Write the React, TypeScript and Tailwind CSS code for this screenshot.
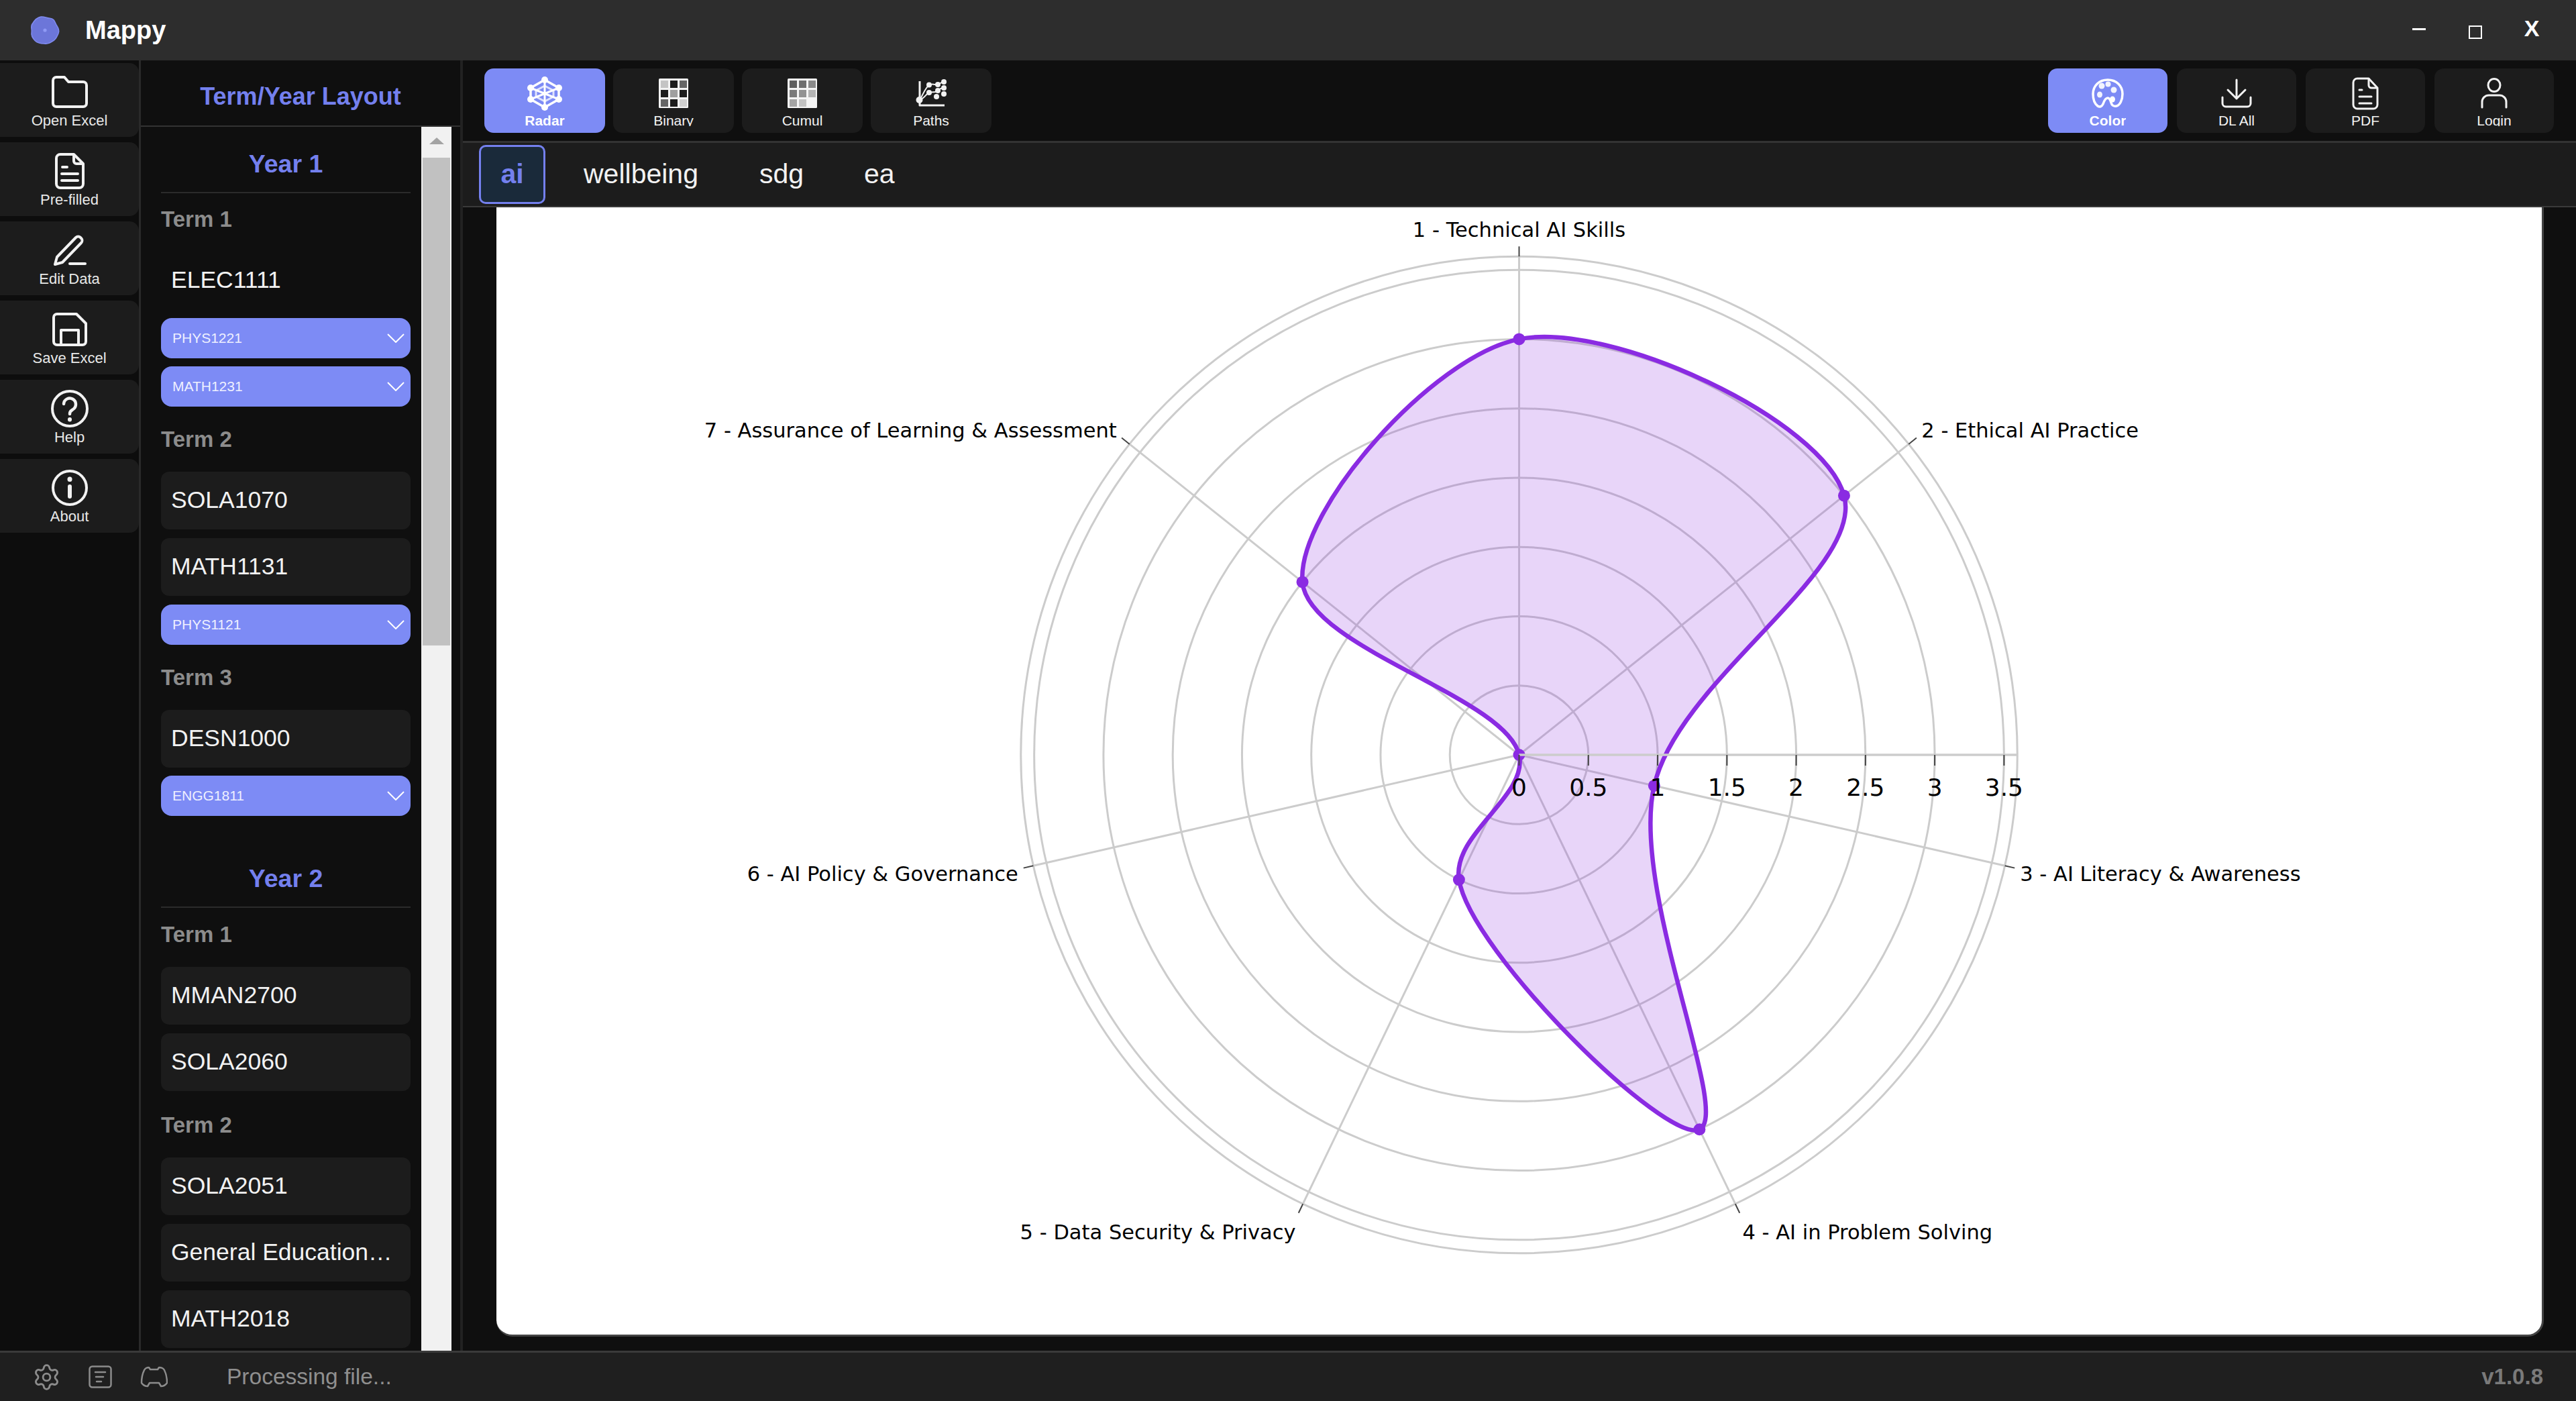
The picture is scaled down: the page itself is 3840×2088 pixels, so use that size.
import React from "react";
import { Settings } from "lucide-react";

const CX = 1525;
const CY = 816;
const UNIT = 206.6;
const OUTER = 743;
const values = [3, 3, 1, 3, 1, 0, 2];
const ang = (i: number) => (i * 2 * Math.PI) / 7;
const polar = (r: number, i: number): [number, number] => [CX + r * Math.sin(ang(i)), CY - r * Math.cos(ang(i))];
const pts = values.map((v, i) => polar(v * UNIT, i));

function controls(p0: number[], p1: number[], p2: number[]) {
  const d1x = p0[0] - p1[0], d1y = p0[1] - p1[1], d2x = p2[0] - p1[0], d2y = p2[1] - p1[1];
  const d1a = Math.pow(d1x * d1x + d1y * d1y, 0.25), d2a = Math.pow(d2x * d2x + d2y * d2y, 0.25);
  const nx = d2a * d2a * d1x - d1a * d1a * d2x, ny = d2a * d2a * d1y - d1a * d1a * d2y;
  const a = 3 * d2a * (d1a + d2a), b = 3 * d1a * (d1a + d2a);
  return [
    [p1[0] + (a ? nx / a : 0), p1[1] + (a ? ny / a : 0)],
    [p1[0] - (b ? nx / b : 0), p1[1] - (b ? ny / b : 0)],
  ];
}
const n = pts.length;
const cps = pts.map((p, i) => controls(pts[(i + n - 1) % n], p, pts[(i + 1) % n]));
let curve = `M${pts[0][0]} ${pts[0][1]}`;
for (let i = 0; i < n; i++) {
  const j = (i + 1) % n;
  curve += `C${cps[i][1][0]} ${cps[i][1][1]} ${cps[j][0][0]} ${cps[j][0][1]} ${pts[j][0]} ${pts[j][1]}`;
}
curve += "Z";

const labels: { t: string; x: number; y: number; a: "start" | "middle" | "end" }[] = [
  { t: "1 - Technical AI Skills", x: 1525, y: 44, a: "middle" },
  { t: "2 - Ethical AI Practice", x: 2125, y: 343, a: "start" },
  { t: "3 - AI Literacy & Awareness", x: 2272, y: 1004, a: "start" },
  { t: "4 - AI in Problem Solving", x: 1858, y: 1538, a: "start" },
  { t: "5 - Data Security & Privacy", x: 1192, y: 1538, a: "end" },
  { t: "6 - AI Policy & Governance", x: 778, y: 1004, a: "end" },
  { t: "7 - Assurance of Learning & Assessment", x: 925, y: 343, a: "end" },
];
const radial = ["0", "0.5", "1", "1.5", "2", "2.5", "3", "3.5"];

function Radar() {
  return (
    <svg width="100%" height="100%" viewBox="0 0 3050 1680" className="block">
      {[0.5, 1, 1.5, 2, 2.5, 3, 3.5].map((v) => (
        <circle key={v} cx={CX} cy={CY} r={v * UNIT} fill="none" stroke="#cccccc" strokeWidth="3" />
      ))}
      <circle cx={CX} cy={CY} r={OUTER} fill="none" stroke="#cccccc" strokeWidth="3" />
      {values.map((_, i) => {
        const e = polar(OUTER, i);
        return <line key={i} x1={CX} y1={CY} x2={e[0]} y2={e[1]} stroke="#cccccc" strokeWidth="3" />;
      })}
      <path d={curve} fill="#8a2be2" fillOpacity="0.2" stroke="none" />
      <path d={curve} fill="none" stroke="#8a2be2" strokeWidth="6.5" />
      {pts.map((p, i) => (
        <circle key={i} cx={p[0]} cy={p[1]} r="9" fill="#8a2be2" />
      ))}
      <line x1={CX} y1={CY} x2={CX + OUTER} y2={CY} stroke="#cccccc" strokeWidth="3.5" />
      {radial.map((t, i) => (
        <g key={t}>
          <line x1={CX + i * 0.5 * UNIT} y1={CY} x2={CX + i * 0.5 * UNIT} y2={CY + 16} stroke="#444444" strokeWidth="2" />
          <text x={CX + i * 0.5 * UNIT} y={CY + 61} textAnchor="middle" fontSize="36" fill="#000" fontFamily="'DejaVu Sans', sans-serif">
            {t}
          </text>
        </g>
      ))}
      {values.map((_, i) => {
        const a = polar(OUTER, i), b = polar(OUTER + 15, i);
        return <line key={i} x1={a[0]} y1={a[1]} x2={b[0]} y2={b[1]} stroke="#444444" strokeWidth="2" />;
      })}
      {labels.map((l) => (
        <text key={l.t} x={l.x} y={l.y} textAnchor={l.a} fontSize="30.5" fill="#000" fontFamily="'DejaVu Sans', sans-serif">
          {l.t}
        </text>
      ))}
    </svg>
  );
}

const S = { fill: "none", stroke: "currentColor", strokeLinecap: "round", strokeLinejoin: "round" } as const;

const FolderIcon = () => (
  <svg width="54" height="50" viewBox="0 0 54 50" {...S} strokeWidth="4">
    <path d="M2 8a5 5 0 0 1 5-5h12l6 7h22a5 5 0 0 1 5 5v27a5 5 0 0 1-5 5H7a5 5 0 0 1-5-5Z" />
  </svg>
);
const DocIcon = () => (
  <svg width="44" height="54" viewBox="0 0 44 54" {...S} strokeWidth="4">
    <path d="M8 2h20l14 14v30a6 6 0 0 1-6 6H8a6 6 0 0 1-6-6V8a6 6 0 0 1 6-6Z" />
    <path d="M28 3v9a4 4 0 0 0 4 4h9" />
    <path d="M11 21h7M10 31h24M10 41h24" />
  </svg>
);
const EditIcon = () => (
  <svg width="50" height="48" viewBox="0 0 50 48" {...S} strokeWidth="4">
    <path d="M3 45l3-11L34 5a5 5 0 0 1 7 0l1 1a5 5 0 0 1 0 7L14 42Z" />
    <path d="M25 44h23" />
  </svg>
);
const SaveIcon = () => (
  <svg width="52" height="50" viewBox="0 0 52 50" {...S} strokeWidth="4">
    <path d="M7 2h29l14 14v27a5 5 0 0 1-5 5H7a5 5 0 0 1-5-5V7a5 5 0 0 1 5-5Z" />
    <path d="M13 47V26h26v21" />
  </svg>
);
const HelpIcon = () => (
  <svg width="56" height="56" viewBox="0 0 56 56" {...S} strokeWidth="4">
    <circle cx="28" cy="28" r="26" />
    <path d="M19 21a9 9 0 1 1 14 8c-3 2-5 3-5 7" strokeWidth="4.5" />
    <path d="M28 44v.5" strokeWidth="6" />
  </svg>
);
const InfoIcon = () => (
  <svg width="54" height="54" viewBox="0 0 54 54" {...S} strokeWidth="4">
    <circle cx="27" cy="27" r="25" />
    <path d="M27 25v15" strokeWidth="6" />
    <path d="M27 14v.5" strokeWidth="7" />
  </svg>
);

const RadarIcon = () => (
  <svg width="52" height="52" viewBox="0 0 52 52" fill="none" stroke="currentColor">
    <path d="M26 6L47 18V35L26 47L5 35V18Z" strokeWidth="3.5" />
    <path d="M26 6V47M5 18L47 35M47 18L5 35" strokeWidth="3" />
    <path d="M26 15L39 22V31L26 38L13 31V22Z" strokeWidth="3" opacity="0.75" />
    {[[26, 6], [47, 18], [47, 35], [26, 47], [5, 35], [5, 18]].map(([x, y]) => (
      <circle key={x + "-" + y} cx={x} cy={y} r="5" fill="currentColor" stroke="none" />
    ))}
  </svg>
);
const Heat = ({ cells }: { cells: string[] }) => (
  <svg width="44" height="44" viewBox="0 0 44 44">
    <rect width="44" height="44" rx="1.5" fill="#f4f4f4" />
    {cells.map((c, i) => (
      <rect key={i} x={3 + (i % 3) * 14} y={3 + Math.floor(i / 3) * 14} width="11" height="11" fill={c} />
    ))}
  </svg>
);
const PathsIcon = () => (
  <svg width="49" height="42" viewBox="183 12 49 42" fill="none" stroke="currentColor">
    <path d="M190 15V51H227" strokeWidth="3" strokeLinejoin="round" />
    <path d="M190 43C195 35 198 25 204 21C210 17 214 22 217 20C220 18 222 17 226 16" strokeWidth="2" />
    <path d="M190 43C198 40 200 33 204 32C210 30 214 33 217 29C220 26 223 25 226 25" strokeWidth="2" />
    {[[204, 20.5], [217, 20], [226, 16], [226, 25], [217, 29], [204, 32], [215, 38], [226, 34]].map(([x, y]) => (
      <circle key={x + "-" + y} cx={x} cy={y} r="4" fill="currentColor" stroke="none" />
    ))}
    <circle cx="189.5" cy="43" r="5" fill="currentColor" stroke="none" />
  </svg>
);
const PaletteIcon = () => (
  <svg width="48" height="44" viewBox="0 0 48 44" fill="none" stroke="currentColor">
    <path d="M24 2C11 2 2 11 2 23c0 8 3 15 7 18 3 2 6 1 8-3 1-3 3-9 7-9 3 0 4 4 5 7 1 4 4 6 8 5 5-1 9-9 9-18C46 11 37 2 24 2Z" strokeWidth="3.5" strokeLinejoin="round" />
    <g fill="currentColor" stroke="none">
      <ellipse cx="15" cy="11" rx="4.5" ry="4.5" opacity="0.9" />
      <ellipse cx="24.5" cy="8.5" rx="4" ry="4" opacity="0.9" />
      <ellipse cx="33" cy="17" rx="4.5" ry="4.5" opacity="0.9" />
      <ellipse cx="12" cy="24" rx="4" ry="4.5" opacity="0.9" />
      <ellipse cx="31" cy="31" rx="4" ry="4.5" />
    </g>
  </svg>
);
const DownloadIcon = () => (
  <svg width="46" height="44" viewBox="0 0 46 44" {...S} strokeWidth="3">
    <path d="M23 2V30M10 17L23 30L36 17" />
    <path d="M2 28V37a5 5 0 0 0 5 5H39a5 5 0 0 0 5-5V28" />
  </svg>
);
const PdfIcon = () => (
  <svg width="40" height="49" viewBox="0 0 40 49" {...S} strokeWidth="3">
    <path d="M8 2H25L38 16V41a6 6 0 0 1-6 6H8a6 6 0 0 1-6-6V8a6 6 0 0 1 6-6Z" />
    <path d="M25 3V12a4 4 0 0 0 4 4H37" />
    <path d="M11 19h4M11 29h18M11 39h18" />
  </svg>
);
const UserIcon = () => (
  <svg width="40" height="46" viewBox="0 0 40 46" {...S} strokeWidth="3">
    <ellipse cx="20" cy="11" rx="9" ry="9.5" />
    <path d="M2 44V36a10 10 0 0 1 10-10H28a10 10 0 0 1 10 10V44" />
  </svg>
);
const LogIcon = () => (
  <svg width="35" height="34" viewBox="0 0 35 34" {...S} strokeWidth="2.5">
    <rect x="1.5" y="1.5" width="32" height="31" rx="4" />
    <path d="M10 10H25M11 17H22M12 24H19" />
  </svg>
);
const DiscordIcon = () => (
  <svg width="41" height="34" viewBox="0 0 41 34" {...S} strokeWidth="2.5">
    <path d="M13 3l2 3h11l2-3c4 0 7 2 8 4 3 6 4 12 4 19-2 3-6 5-9 5l-3-5H14l-3 5c-3 0-7-2-9-5 0-7 1-13 4-19 1-2 4-4 7-4Z" />
  </svg>
);

const sideItems = [
  { label: "Open Excel", icon: <FolderIcon /> },
  { label: "Pre-filled", icon: <DocIcon /> },
  { label: "Edit Data", icon: <EditIcon /> },
  { label: "Save Excel", icon: <SaveIcon /> },
  { label: "Help", icon: <HelpIcon /> },
  { label: "About", icon: <InfoIcon /> },
];

function SideButton({ label, icon }: { label: string; icon: React.ReactNode }) {
  return (
    <div className="h-[110px] rounded-r-[14px] bg-[#1c1c1c] flex flex-col items-center text-[#f2f2f2]">
      <div className="h-[73px] pt-[13px] flex items-center justify-center shrink-0">{icon}</div>
      <div className="text-[22px] leading-[26px] text-[#e8e8e8]">{label}</div>
    </div>
  );
}

function ToolButton({ label, icon, active, right }: { label: string; icon: React.ReactNode; active?: boolean; right?: boolean }) {
  return (
    <div className={(right ? "w-[178px] " : "w-[180px] ") + "h-[96px] rounded-[14px] flex flex-col items-center " + (active ? "bg-[#7d8bf5] text-white font-bold" : "bg-[#1c1c1c] text-[#f2f2f2]")}>
      <div className="h-[65px] pt-[9px] flex items-center justify-center shrink-0">{icon}</div>
      <div className="h-[21px] overflow-hidden text-[21px] leading-[26px]">{label}</div>
    </div>
  );
}

const Course = ({ name }: { name: string }) => (
  <div className="h-[86px] rounded-[12px] bg-[#1c1c1c] pl-[15px] pr-[22px] flex items-center text-[35.5px] text-[#f2f2f2] whitespace-nowrap overflow-hidden">
    <span className="truncate">{name}</span>
  </div>
);
const Plain = ({ name }: { name: string }) => (
  <div className="h-[86px] pl-[15px] flex items-center text-[35.5px] text-[#f2f2f2]">{name}</div>
);
const Drop = ({ name }: { name: string }) => (
  <div className="h-[60px] rounded-[16px] bg-[#7d8bf5] pl-[17px] pr-[9px] flex items-center justify-between text-[21px] text-[#eef0ff]">
    <span>{name}</span>
    <svg width="26" height="14" viewBox="0 0 26 14" fill="none" stroke="#ffffff" strokeWidth="2">
      <path d="M1 1L13 13L25 1" />
    </svg>
  </div>
);
const TermLabel = ({ t }: { t: string }) => <div className="h-[40px] leading-[40px] text-[33px] font-bold text-[#8c8c8c] mb-[28px]">{t}</div>;
const YearHead = ({ t, top }: { t: string; top: string }) => (
  <div className={top + " h-[65px] border-b-2 border-[#2b2b2b] text-center text-[37.5px] leading-[42px] font-bold text-[#7480ee]"}>{t}</div>
);

export default function App() {
  return (
    <div className="w-full h-[2088px] flex flex-col overflow-hidden bg-[#0f0f0f] font-['Liberation_Sans',Arial,sans-serif]">
      {/* title bar */}
      <div className="h-[90px] shrink-0 bg-[#2d2d2d] flex items-center">
        <div className="pl-[44px] w-[127px] shrink-0">
          <svg width="46" height="46" viewBox="0 0 44 44">
            <path
              d="M16 3C21 2 24 5 29 5C35 5 36 10 38 14C41 19 43 22 41 27C39 31 38 35 34 37C30 40 26 42 21 41C17 41 12 41 8 37C4 33 2 30 3 25C4 21 1 17 4 13C7 8 10 4 16 3Z"
              fill="#6c76d9"
              stroke="#7f8aee"
              strokeWidth="1.5"
            />
            <circle cx="22" cy="22" r="2.5" fill="#8f9af5" />
          </svg>
        </div>
        <div className="text-[38px] font-bold text-white">Mappy</div>
        <div className="ml-auto pr-[24px] flex items-center text-white">
          <div className="w-[84px] flex justify-center"><div className="w-[20px] h-[3px] bg-white mb-[4px]" /></div>
          <div className="w-[84px] flex justify-center"><div className="w-[20px] h-[20px] border-2 border-white mt-[6px]" /></div>
          <div className="w-[84px] text-center text-[34px] leading-[34px] font-bold mb-[6px]">X</div>
        </div>
      </div>

      <div className="flex-1 min-h-0 flex">
        {/* icon sidebar */}
        <div className="w-[210px] shrink-0 bg-[#0d0d0d] border-r-[3px] border-[#2a2a2a] pt-[4px] flex flex-col gap-[8px]">
          {sideItems.map((s) => (
            <SideButton key={s.label} label={s.label} icon={s.icon} />
          ))}
        </div>

        {/* term panel */}
        <div className="w-[480px] shrink-0 border-r-[4px] border-[#222222] bg-[#0f0f0f] flex flex-col min-h-0">
          <div className="h-[99px] shrink-0 border-b-2 border-[#333333] flex items-center justify-center pt-[10px] text-[36px] font-bold text-[#7480ee]">
            Term/Year Layout
          </div>
          <div className="flex-1 min-h-0 flex overflow-hidden">
            <div className="w-[418px] shrink-0 pl-[30px] pr-[16px]">
              <YearHead t="Year 1" top="mt-[34px]" />
              <div className="mt-[19px]"><TermLabel t="Term 1" /></div>
              <div className="flex flex-col gap-[13px]">
                <Plain name="ELEC1111" />
                <div className="flex flex-col gap-[12px]">
                  <Drop name="PHYS1221" />
                  <Drop name="MATH1231" />
                </div>
              </div>
              <div className="mt-[29px]"><TermLabel t="Term 2" /></div>
              <div className="flex flex-col gap-[13px]">
                <Course name="SOLA1070" />
                <Course name="MATH1131" />
                <Drop name="PHYS1121" />
              </div>
              <div className="mt-[29px]"><TermLabel t="Term 3" /></div>
              <div className="flex flex-col gap-[12px]">
                <Course name="DESN1000" />
                <Drop name="ENGG1811" />
              </div>
              <YearHead t="Year 2" top="mt-[72px]" />
              <div className="mt-[20px]"><TermLabel t="Term 1" /></div>
              <div className="flex flex-col gap-[13px]">
                <Course name="MMAN2700" />
                <Course name="SOLA2060" />
              </div>
              <div className="mt-[31px]"><TermLabel t="Term 2" /></div>
              <div className="flex flex-col gap-[13px]">
                <Course name="SOLA2051" />
                <Course name="General Education Course" />
                <Course name="MATH2018" />
              </div>
            </div>
            <div className="w-[45px] shrink-0 bg-[#f1f1f1] flex flex-col">
              <div className="h-[46px] flex items-center justify-center">
                <div className="w-0 h-0 border-l-[11px] border-r-[11px] border-b-[10px] border-l-transparent border-r-transparent border-b-[#a3a3a3] mb-[4px]" />
              </div>
              <div className="h-[727px] w-[41px] mx-auto bg-[#c1c1c1]" />
            </div>
          </div>
        </div>

        {/* main */}
        <div className="flex-1 min-w-0 flex flex-col bg-[#0f0f0f]">
          <div className="h-[123px] shrink-0 border-b-[3px] border-[#333333] pt-[12px] pl-[32px] pr-[33px] flex items-start justify-between">
            <div className="flex gap-[12px]">
              <ToolButton label="Radar" icon={<RadarIcon />} active />
              <ToolButton label="Binary" icon={<Heat cells={["#c4c4c4", "#1c1c1c", "#666666", "#1c1c1c", "#a0a0a0", "#1c1c1c", "#666666", "#1c1c1c", "#cfcfcf"]} />} />
              <ToolButton label="Cumul" icon={<Heat cells={["#5e5e5e", "#6e6e6e", "#8a8a8a", "#7a7a7a", "#929292", "#b4b4b4", "#a4a4a4", "#c2c2c2", "#f4f4f4"]} />} />
              <ToolButton label="Paths" icon={<PathsIcon />} />
            </div>
            <div className="flex gap-[14px]">
              <ToolButton right label="Color" icon={<PaletteIcon />} active />
              <ToolButton right label="DL All" icon={<DownloadIcon />} />
              <ToolButton right label="PDF" icon={<PdfIcon />} />
              <ToolButton right label="Login" icon={<UserIcon />} />
            </div>
          </div>
          <div className="h-[96px] shrink-0 border-b-2 border-[#3a3a3a] bg-[#1c1c1c] pl-[24px] flex items-center text-[41px] text-[#f2f2f2]">
            <div className="w-[99px] h-[88px] rounded-[10px] border-[3px] border-[#7480ee] bg-[#1a2a3a] flex items-center justify-center font-bold text-[#7480ee] mr-[12px]">ai</div>
            <div className="px-[45px]">wellbeing</div>
            <div className="px-[46px]">sdg</div>
            <div className="px-[44px]">ea</div>
          </div>
          <div className="flex-1 min-h-0 pl-[50px] pr-[48px] pb-[21px]">
            <div className="h-full bg-white rounded-b-[24px] border-b-[3px] border-r-[3px] border-[#444444] overflow-hidden">
              <Radar />
            </div>
          </div>
        </div>
      </div>

      {/* status bar */}
      <div className="h-[75px] shrink-0 border-t-[3px] border-[#3a3a3a] bg-[#1f1f1f] pl-[48px] pr-[49px] flex items-center text-[#8c8c8c]">
        <Settings size={43} strokeWidth={1.6} className="text-[#8c8c8c]" />
        <div className="ml-[41px]"><LogIcon /></div>
        <div className="ml-[42px]"><DiscordIcon /></div>
        <div className="ml-[88px] text-[33.5px] text-[#8f8f8f]">Processing file...</div>
        <div className="ml-auto text-[33px] font-bold text-[#7a7a7a]">v1.0.8</div>
      </div>
    </div>
  );
}
